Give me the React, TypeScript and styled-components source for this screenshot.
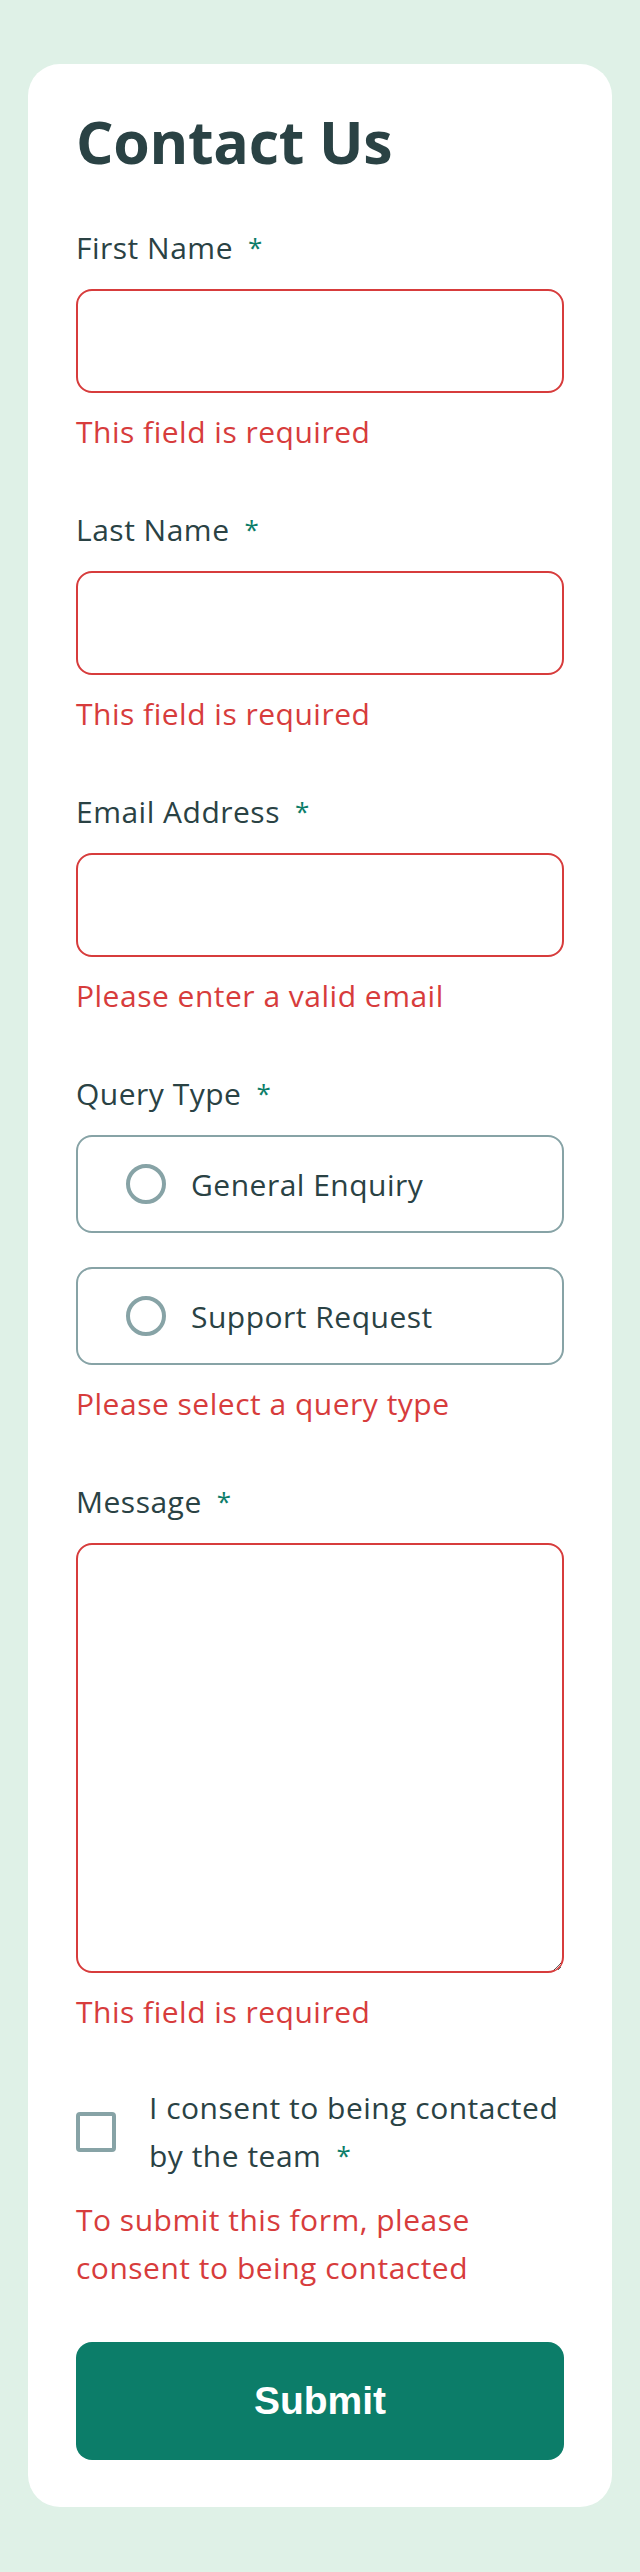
import React from "react";
import styled, { createGlobalStyle, css } from "styled-components";

const GlobalStyle = createGlobalStyle`
  *, *::before, *::after { box-sizing: border-box; }
  html, body { margin: 0; padding: 0; }
  body {
    background: #dff1e7;
    font-family: "Open Sans", "Noto Sans", sans-serif;
    color: #2a4244;
  }
`;

const requiredMark = css`
  &::after {
    content: "*";
    color: #0c7d69;
    font-size: 26px;
    line-height: 1;
    margin-left: 15px;
    vertical-align: 2px;
  }
`;

const Page = styled.main`
  padding: 64px 28px 65px;
`;

const Card = styled.section`
  background: #ffffff;
  border-radius: 32px;
  padding: 48px 48px 47px;
`;

const Title = styled.h1`
  margin: 0;
  font-family: "Open Sans", sans-serif;
  font-weight: 700;
  font-size: 59px;
  line-height: 59px;
  letter-spacing: -0.3px;
  color: #2a4244;
`;

const Form = styled.form`
  display: flex;
  flex-direction: column;
  margin-top: 54px;
`;

const Field = styled.div<{ $gap?: number }>`
  display: flex;
  flex-direction: column;
  margin-top: ${(p) => (p.$gap ?? 53)}px;
  &:first-child { margin-top: 0; }
`;

const Label = styled.label`
  display: block;
  font-size: 30px;
  line-height: 45px;
  letter-spacing: 0.5px;
  margin-bottom: 19px;
  color: #2a4244;
  ${requiredMark}
`;

const TextInput = styled.input`
  display: block;
  width: 100%;
  height: 104px;
  margin: 0;
  padding: 0 36px;
  border: 2px solid #d73c3c;
  border-radius: 16px;
  background: #fff;
  font: inherit;
  font-size: 30px;
  color: #2a4244;
  outline: none;
`;

const TextArea = styled.textarea`
  display: block;
  width: 100%;
  height: 430px;
  margin: 0;
  padding: 24px 36px;
  border: 2px solid #d73c3c;
  border-radius: 16px;
  background: #fff;
  font: inherit;
  font-size: 30px;
  color: #2a4244;
  outline: none;
`;

const ErrorText = styled.p<{ $lh?: number }>`
  margin: 16px 0 0;
  color: #d73c3c;
  font-size: 30px;
  line-height: ${(p) => p.$lh ?? 45}px;
  letter-spacing: 0.5px;
`;

const RadioList = styled.div`
  display: flex;
  flex-direction: column;
  gap: 34px;
`;

const RadioOption = styled.label`
  display: flex;
  align-items: center;
  gap: 25px;
  height: 98px;
  padding-left: 48px;
  border: 2px solid #87a3a6;
  border-radius: 16px;
  cursor: pointer;
`;

const RadioText = styled.span`
  font-size: 30px;
  line-height: 45px;
  letter-spacing: 0.5px;
  color: #2a4244;
`;

const RadioInput = styled.input`
  appearance: none;
  -webkit-appearance: none;
  flex-shrink: 0;
  width: 40px;
  height: 40px;
  margin: 0;
  border: 4px solid #87a3a6;
  border-radius: 50%;
  background: #fff;
`;

const ConsentRow = styled.label`
  display: flex;
  align-items: center;
  gap: 33px;
  margin-top: 50px;
  cursor: pointer;
`;

const Checkbox = styled.input`
  appearance: none;
  -webkit-appearance: none;
  flex-shrink: 0;
  width: 40px;
  height: 40px;
  margin: 0;
  border: 4px solid #87a3a6;
  border-radius: 4px;
  background: #fff;
`;

const ConsentText = styled.span`
  font-size: 30px;
  line-height: 48px;
  letter-spacing: 0.5px;
  color: #2a4244;
  ${requiredMark}
`;

const SubmitButton = styled.button`
  display: block;
  width: 100%;
  height: 118px;
  margin-top: 50px;
  border: none;
  border-radius: 16px;
  background: #0c7d69;
  color: #ffffff;
  font-family: "Liberation Sans", Arial, sans-serif;
  font-weight: 700;
  font-size: 39px;
  cursor: pointer;
`;

export default function App() {
  return (
    <>
      <GlobalStyle />
      <Page>
        <Card>
          <Title>Contact Us</Title>
          <Form noValidate onSubmit={(e) => e.preventDefault()}>
            <Field>
              <Label htmlFor="first">First Name</Label>
              <TextInput id="first" type="text" />
              <ErrorText>This field is required</ErrorText>
            </Field>
            <Field>
              <Label htmlFor="last">Last Name</Label>
              <TextInput id="last" type="text" />
              <ErrorText>This field is required</ErrorText>
            </Field>
            <Field>
              <Label htmlFor="email">Email Address</Label>
              <TextInput id="email" type="email" />
              <ErrorText>Please enter a valid email</ErrorText>
            </Field>
            <Field>
              <Label as="span">Query Type</Label>
              <RadioList>
                <RadioOption>
                  <RadioInput type="radio" name="query" value="general" />
                  <RadioText>General Enquiry</RadioText>
                </RadioOption>
                <RadioOption>
                  <RadioInput type="radio" name="query" value="support" />
                  <RadioText>Support Request</RadioText>
                </RadioOption>
              </RadioList>
              <ErrorText>Please select a query type</ErrorText>
            </Field>
            <Field>
              <Label htmlFor="message">Message</Label>
              <TextArea id="message" />
              <ErrorText>This field is required</ErrorText>
            </Field>
            <ConsentRow>
              <Checkbox type="checkbox" />
              <ConsentText>I consent to being contacted by the team</ConsentText>
            </ConsentRow>
            <ErrorText $lh={48}>
              To submit this form, please consent to being contacted
            </ErrorText>
            <SubmitButton type="submit">Submit</SubmitButton>
          </Form>
        </Card>
      </Page>
    </>
  );
}
